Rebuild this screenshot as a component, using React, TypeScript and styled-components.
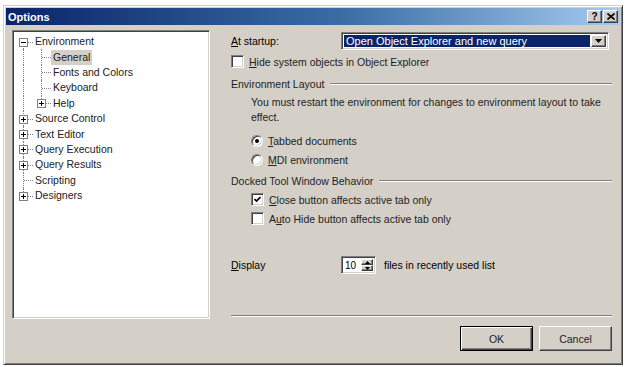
import React from 'react';
import styled, { createGlobalStyle, css } from 'styled-components';

const Global = createGlobalStyle`
  html, body { margin: 0; padding: 0; background: #ffffff; }
  body {
    font-family: "Liberation Sans", Arial, sans-serif;
    font-size: 10.5px;
    color: #000;
  }
  * { box-sizing: border-box; }
`;

const Page = styled.div`
  width: 625px;
  height: 367px;
  padding: 5px 0 0 3px;
`;

const Window = styled.div`
  width: 620px;
  height: 360px;
  background: #d4d0c8;
  border: 1px solid;
  border-color: #d4d0c8 #404040 #404040 #d4d0c8;
  box-shadow: inset 1px 1px 0 #ffffff, inset -1px -1px 0 #808080;
  padding: 2px;
  display: flex;
  flex-direction: column;
`;

const TitleBar = styled.div`
  height: 17px;
  display: flex;
  align-items: center;
  padding: 0 2px 0 2px;
  background: linear-gradient(90deg, #0a246a 0%, #3a6ea5 55%, #a6caf0 100%);
`;

const TitleText = styled.div`
  flex: 1;
  color: #fff;
  font-weight: bold;
  font-size: 11px;
`;

const raised = css`
  background: #d4d0c8;
  border: 1px solid;
  border-color: #ffffff #404040 #404040 #ffffff;
  box-shadow: inset -1px -1px 0 #808080;
`;

const sunken = css`
  border: 1px solid;
  border-color: #808080 #ffffff #ffffff #808080;
  box-shadow: inset 1px 1px 0 #404040, inset -1px -1px 0 #d4d0c8;
`;

const CaptionButton = styled.div`
  ${raised};
  width: 15px;
  height: 13px;
  margin-left: 1px;
  display: flex;
  align-items: center;
  justify-content: center;
  font-weight: bold;
  font-size: 10px;
  line-height: 1;
`;

const Client = styled.div`
  flex: 1;
  display: flex;
  align-items: flex-start;
  padding: 5px 0 0 6px;
`;

const Tree = styled.div`
  ${sunken};
  background: #fff;
  width: 198px;
  height: 289px;
  padding: 3px 2px 0 2px;
  display: flex;
  flex-direction: column;
`;

const TreeRow = styled.div`
  display: flex;
  align-items: center;
  height: 15.4px;
`;

type CellKind = 'first' | 'tee' | 'end' | 'pipe';

const Cell = styled.div<{ $kind: CellKind }>`
  position: relative;
  width: 18px;
  height: 100%;
  flex: none;
  &::before {
    content: '';
    position: absolute;
    left: 8px;
    border-left: 1px dotted #808080;
    top: ${(p) => (p.$kind === 'first' ? '50%' : '0')};
    bottom: ${(p) => (p.$kind === 'end' ? '50%' : '0')};
  }
  &::after {
    content: '';
    position: absolute;
    left: 9px;
    width: 9px;
    top: 50%;
    border-top: 1px dotted #808080;
    display: ${(p) => (p.$kind === 'pipe' ? 'none' : 'block')};
  }
`;

const Expander = styled.div`
  position: absolute;
  z-index: 1;
  left: 4px;
  top: 50%;
  margin-top: -4px;
  width: 9px;
  height: 9px;
  border: 1px solid #808080;
  background: #fff;
  display: flex;
  align-items: center;
  justify-content: center;
`;

const TreeLabel = styled.div<{ $selected?: boolean }>`
  padding: 1px 2px 2px 2px;
  white-space: nowrap;
  background: ${(p) => (p.$selected ? '#d4d0c8' : 'transparent')};
  color: #222;
`;

const Pane = styled.div`
  width: 381px;
  margin-left: 21px;
  display: flex;
  flex-direction: column;
`;

const FieldRow = styled.div<{ $mt: number }>`
  display: flex;
  align-items: center;
  margin-top: ${(p) => p.$mt}px;
`;

const FieldLabel = styled.div`
  width: 110px;
  flex: none;
`;

const Combo = styled.div`
  ${sunken};
  width: 268px;
  height: 18px;
  background: #fff;
  display: flex;
  align-items: stretch;
  padding: 2px;
`;

const ComboValue = styled.div`
  flex: 1;
  background: #0a246a;
  color: #fff;
  display: flex;
  align-items: center;
  padding-left: 2px;
  margin-right: 1px;
  font-size: 11px;
`;

const ComboButton = styled.div`
  ${raised};
  width: 15px;
  display: flex;
  align-items: center;
  justify-content: center;
`;

const CheckRow = styled.div<{ $mt: number; $indent?: number }>`
  display: flex;
  align-items: center;
  height: 13px;
  margin-top: ${(p) => p.$mt}px;
  padding-left: ${(p) => p.$indent ?? 0}px;
  color: #222;
`;

const CheckBox = styled.div`
  ${sunken};
  width: 13px;
  height: 13px;
  background: #fff;
  flex: none;
  margin-right: 5px;
  display: flex;
  align-items: center;
  justify-content: center;
`;

const Radio = styled.div<{ $checked?: boolean }>`
  width: 12px;
  height: 12px;
  flex: none;
  border-radius: 50%;
  border: 1px solid;
  border-color: #808080 #ffffff #ffffff #808080;
  box-shadow: inset 1px 1px 0 #404040, inset -1px -1px 0 #d4d0c8;
  background: #fff;
  margin-right: 5px;
  display: flex;
  align-items: center;
  justify-content: center;
  &::after {
    content: '';
    width: 4px;
    height: 4px;
    border-radius: 50%;
    background: #000;
    display: ${(p) => (p.$checked ? 'block' : 'none')};
  }
`;

const GroupHeader = styled.div<{ $mt: number }>`
  display: flex;
  align-items: center;
  height: 13px;
  margin-top: ${(p) => p.$mt}px;
  color: #222;
  &::after {
    content: '';
    flex: 1;
    margin-left: 6px;
    border-top: 1px solid #808080;
    border-bottom: 1px solid #ffffff;
  }
`;

const Paragraph = styled.div`
  margin-top: 5px;
  padding-left: 20px;
  line-height: 15px;
  color: #222;
`;

const Spinner = styled.div`
  ${sunken};
  width: 35px;
  height: 18px;
  background: #fff;
  display: flex;
  padding: 2px;
  margin-right: 8px;
`;

const SpinValue = styled.div`
  flex: 1;
  display: flex;
  align-items: center;
  padding-left: 1px;
  font-size: 10px;
`;

const SpinButtons = styled.div`
  width: 12px;
  display: flex;
  flex-direction: column;
`;

const SpinButton = styled.div`
  ${raised};
  flex: 1;
  display: flex;
  align-items: center;
  justify-content: center;
`;

const Separator = styled.div`
  margin-top: 41px;
  border-top: 1px solid #808080;
  border-bottom: 1px solid #ffffff;
`;

const ButtonRow = styled.div`
  display: flex;
  justify-content: flex-end;
  gap: 6px;
  margin-top: 9px;
`;

const DialogButton = styled.div<{ $default?: boolean }>`
  width: 73px;
  height: 25px;
  display: flex;
  align-items: center;
  justify-content: center;
  background: #d4d0c8;
  color: #222;
  border: 1px solid;
  border-color: ${(p) => (p.$default ? '#000' : '#fff #404040 #404040 #fff')};
  box-shadow: ${(p) =>
    p.$default
      ? 'inset 1px 1px 0 #fff, inset -1px -1px 0 #404040, inset -2px -2px 0 #808080'
      : 'inset -1px -1px 0 #808080'};
`;

const U = styled.span`
  text-decoration: underline;
`;

const Tri = ({ up, size = 7 }: { up?: boolean; size?: number }) => (
  <svg width={size} height={Math.ceil(size / 2)} viewBox={`0 0 ${size} ${Math.ceil(size / 2)}`}>
    <polygon
      points={
        up
          ? `${size / 2},0 ${size},${Math.ceil(size / 2)} 0,${Math.ceil(size / 2)}`
          : `0,0 ${size},0 ${size / 2},${Math.ceil(size / 2)}`
      }
      fill="#000"
    />
  </svg>
);

const PlusMinus = ({ plus }: { plus?: boolean }) => (
  <svg width="5" height="5" viewBox="0 0 5 5">
    <rect x="0" y="2" width="5" height="1" fill="#000" />
    {plus && <rect x="2" y="0" width="1" height="5" fill="#000" />}
  </svg>
);

const Check = () => (
  <svg width="7" height="7" viewBox="0 0 7 7">
    <polyline points="0.5,3 2.5,5 6.5,1" fill="none" stroke="#000" strokeWidth="1.7" />
  </svg>
);

type Node = { cells: CellKind[]; box?: 'plus' | 'minus'; label: string; selected?: boolean };

const nodes: Node[] = [
  { cells: ['first'], box: 'minus', label: 'Environment' },
  { cells: ['pipe', 'tee'], label: 'General', selected: true },
  { cells: ['pipe', 'tee'], label: 'Fonts and Colors' },
  { cells: ['pipe', 'tee'], label: 'Keyboard' },
  { cells: ['pipe', 'end'], box: 'plus', label: 'Help' },
  { cells: ['tee'], box: 'plus', label: 'Source Control' },
  { cells: ['tee'], box: 'plus', label: 'Text Editor' },
  { cells: ['tee'], box: 'plus', label: 'Query Execution' },
  { cells: ['tee'], box: 'plus', label: 'Query Results' },
  { cells: ['tee'], label: 'Scripting' },
  { cells: ['end'], box: 'plus', label: 'Designers' },
];

export default function App() {
  return (
    <Page>
      <Global />
      <Window>
        <TitleBar>
          <TitleText>Options</TitleText>
          <CaptionButton>?</CaptionButton>
          <CaptionButton>
            <svg width="8" height="7" viewBox="0 0 8 7">
              <path d="M0.5 0.5 L7.5 6.5 M7.5 0.5 L0.5 6.5" stroke="#000" strokeWidth="1.6" />
            </svg>
          </CaptionButton>
        </TitleBar>
        <Client>
          <Tree>
            {nodes.map((n) => (
              <TreeRow key={n.label}>
                {n.cells.map((c, i) => (
                  <Cell key={i} $kind={c}>
                    {i === n.cells.length - 1 && n.box && (
                      <Expander>
                        <PlusMinus plus={n.box === 'plus'} />
                      </Expander>
                    )}
                  </Cell>
                ))}
                <TreeLabel $selected={n.selected}>{n.label}</TreeLabel>
              </TreeRow>
            ))}
          </Tree>
          <Pane>
            <FieldRow $mt={2}>
              <FieldLabel>
                <U>A</U>t startup:
              </FieldLabel>
              <Combo>
                <ComboValue>Open Object Explorer and new query</ComboValue>
                <ComboButton>
                  <Tri />
                </ComboButton>
              </Combo>
            </FieldRow>
            <CheckRow $mt={5}>
              <CheckBox />
              <span>
                <U>H</U>ide system objects in Object Explorer
              </span>
            </CheckRow>
            <GroupHeader $mt={9}>Environment Layout</GroupHeader>
            <Paragraph>
              You must restart the environment for changes to environment layout to take
              <br />
              effect.
            </Paragraph>
            <CheckRow $mt={9} $indent={20}>
              <Radio $checked />
              <span>
                <U>T</U>abbed documents
              </span>
            </CheckRow>
            <CheckRow $mt={6} $indent={20}>
              <Radio />
              <span>
                <U>M</U>DI environment
              </span>
            </CheckRow>
            <GroupHeader $mt={8}>Docked Tool Window Behavior</GroupHeader>
            <CheckRow $mt={6} $indent={20}>
              <CheckBox>
                <Check />
              </CheckBox>
              <span>
                <U>C</U>lose button affects active tab only
              </span>
            </CheckRow>
            <CheckRow $mt={6} $indent={20}>
              <CheckBox />
              <span>
                A<U>u</U>to Hide button affects active tab only
              </span>
            </CheckRow>
            <FieldRow $mt={31}>
              <FieldLabel>
                <U>D</U>isplay
              </FieldLabel>
              <Spinner>
                <SpinValue>10</SpinValue>
                <SpinButtons>
                  <SpinButton>
                    <Tri up size={5} />
                  </SpinButton>
                  <SpinButton>
                    <Tri size={5} />
                  </SpinButton>
                </SpinButtons>
              </Spinner>
              <span>files in recently used list</span>
            </FieldRow>
            <Separator />
            <ButtonRow>
              <DialogButton $default>OK</DialogButton>
              <DialogButton>Cancel</DialogButton>
            </ButtonRow>
          </Pane>
        </Client>
      </Window>
    </Page>
  );
}
